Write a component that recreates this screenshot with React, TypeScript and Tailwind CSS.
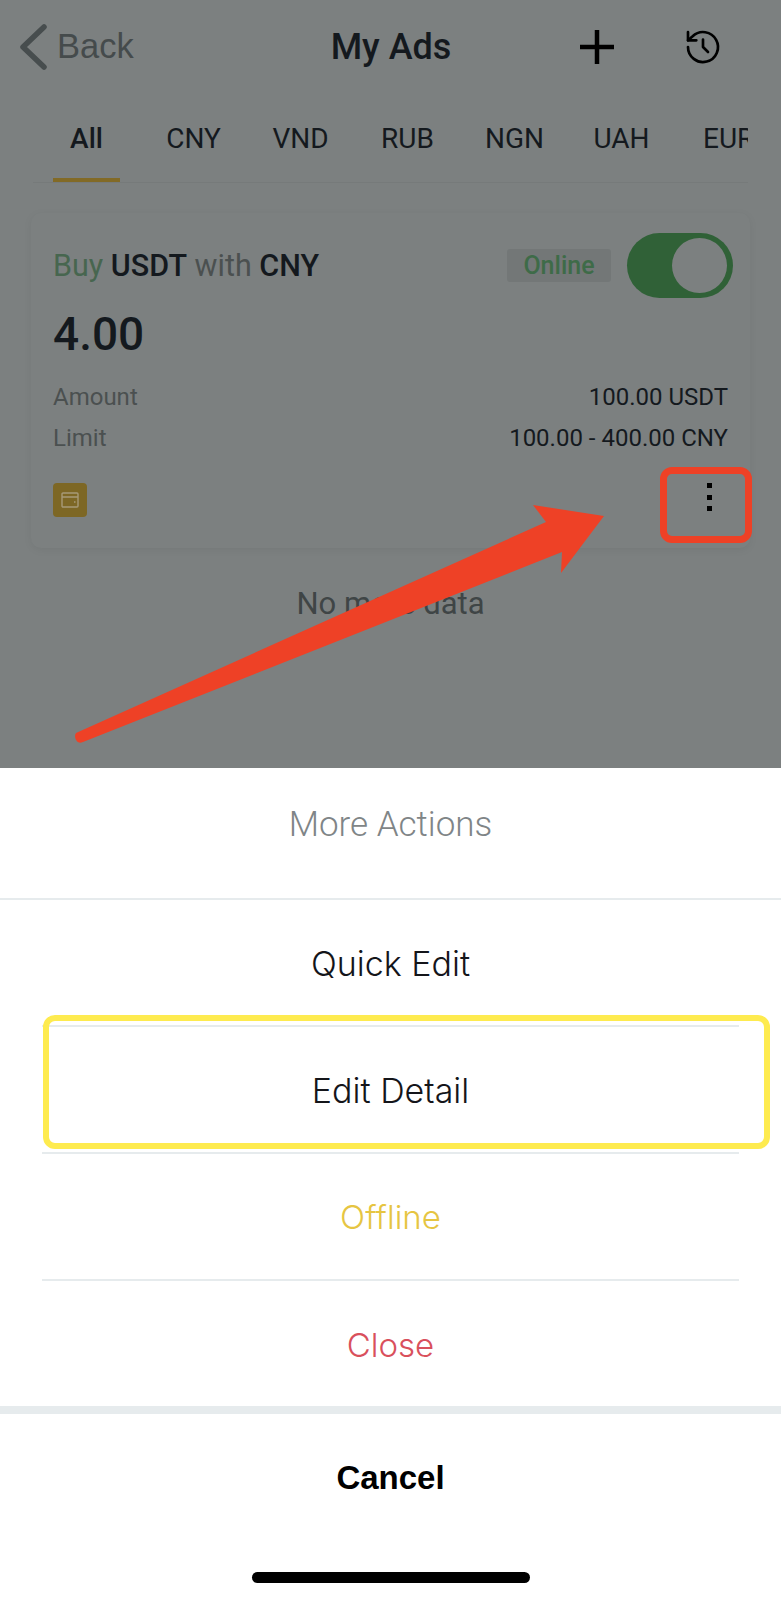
import React from "react";

const din = "font-['Roboto',sans-serif]";

function Header() {
  return (
    <div className="flex h-[94px] items-center pl-[18px]">
      <svg width="30" height="46" viewBox="0 0 30 46" className="shrink-0">
        <path d="M26 3 L5 23 L26 43" fill="none" stroke="#474d4e" strokeWidth="5.5" strokeLinecap="round" strokeLinejoin="round" />
      </svg>
      <span className="ml-[9px] w-[77px] font-['Liberation_Sans',sans-serif] text-[34.5px] text-[#454b4c]">Back</span>
      <span className={`ml-[192px] w-[130px] text-center whitespace-nowrap ${din} text-[36px] font-medium text-[#14191e]`}>My Ads</span>
      <svg width="36" height="36" viewBox="0 0 36 36" className="ml-[123px] shrink-0">
        <path d="M18 1V35M1 18H35" stroke="#000" strokeWidth="4.5" />
      </svg>
      <svg width="40" height="40" viewBox="0 0 24 24" className="ml-[68px] shrink-0" fill="none" stroke="#000" strokeWidth="1.6" strokeLinecap="round" strokeLinejoin="round">
        <path d="M3 12a9 9 0 1 0 2.8-6.5L3 8" />
        <path d="M3 3v5h5" />
        <path d="M12 7.5V12l3 3" />
      </svg>
    </div>
  );
}

function Tabs() {
  const tabs = ["CNY", "VND", "RUB", "NGN", "UAH"];
  return (
    <div className="mx-[33px] h-[89px] border-b border-[#767a7a]">
      <div className={`flex h-[88px] items-start ${din} text-[28px] text-[#14191e]`}>
        <div className="relative ml-[20px] flex h-[88px] w-[67px] justify-center pt-[24px] font-medium">
          All
          <div className="absolute bottom-0 left-0 h-[4px] w-[67px] bg-[#826a26]" />
        </div>
        <div className="ml-[20px] flex w-[608px] overflow-hidden pt-[24px]">
          {tabs.map((t) => (
            <div key={t} className="flex w-[107px] shrink-0 justify-center">{t}</div>
          ))}
          <div className="w-[73px] shrink-0 overflow-hidden whitespace-nowrap pl-[28px]">EUR</div>
        </div>
      </div>
    </div>
  );
}

function Card() {
  return (
    <div className={`mx-[31px] mt-[30px] h-[335px] rounded-[10px] bg-[#7c8080] px-[22px] shadow-[0_2px_8px_rgba(0,0,0,0.06)] ${din}`}>
      <div className="flex h-[100px] items-start pt-[20px]">
        <div className="mt-[15px] whitespace-nowrap text-[30.5px] leading-[36px] text-[#14191e]">
          <span className="text-[#47664f]">Buy</span> <span className="font-medium">USDT</span>{" "}
          <span className="text-[#4b5050]">with</span> <span className="font-medium">CNY</span>
        </div>
        <div className="ml-auto mt-[16px] flex h-[33px] w-[104px] items-center justify-center rounded-[3px] bg-[#737777] text-[25px] font-medium text-[#3e6b48]">
          Online
        </div>
        <div className="ml-[16px] mr-[-5px] flex h-[65px] w-[106px] shrink-0 items-center justify-end rounded-full bg-[#306137] pr-[6px]">
          <div className="h-[55px] w-[55px] rounded-full bg-[#7c8080]" />
        </div>
      </div>
      <div className="mt-[-7px] text-[46px] font-medium leading-[56px] text-[#14191e]">4.00</div>
      <div className="mt-[14px] flex h-[41px] items-center justify-between text-[24px] text-[#14191e]">
        <span className="text-[#4b5050]">Amount</span>
        <span>100.00 USDT</span>
      </div>
      <div className="flex h-[41px] items-center justify-between text-[24px] text-[#14191e]">
        <span className="text-[#4b5050]">Limit</span>
        <span>100.00 - 400.00 CNY</span>
      </div>
      <div className="mt-[25px] flex items-start justify-between">
        <div className="flex h-[34px] w-[34px] items-center justify-center rounded-[4px] bg-[#7d6725]">
          <svg width="20" height="20" viewBox="0 0 20 20" fill="none" stroke="#a79a78" strokeWidth="1.4">
            <rect x="2" y="3" width="16" height="14" rx="1" />
            <path d="M2 7H18M14 12h1.5" />
          </svg>
        </div>
        <div className="mr-[16px] flex h-[28px] flex-col justify-between">
          <div className="h-[5px] w-[5px] bg-black" />
          <div className="h-[5px] w-[5px] bg-black" />
          <div className="h-[5px] w-[5px] bg-black" />
        </div>
      </div>
    </div>
  );
}

function Row({ label, color }: { label: string; color: string }) {
  return (
    <div className="mx-[42px] flex h-[127px] items-center justify-center border-b-2 border-[#e6ebed] pt-[2px]">
      <span className={`font-['Inter',sans-serif] text-[34px] font-light ${color}`}>{label}</span>
    </div>
  );
}

function Sheet() {
  return (
    <div className="flex h-[832px] flex-col bg-white">
      <div className="flex h-[132px] items-center justify-center border-b-2 border-[#e6ebed] pb-[16px] font-['Roboto',sans-serif] text-[35px] font-light text-[#7f8587]">
        More Actions
      </div>
      <Row label="Quick Edit" color="text-[#14151a]" />
      <Row label="Edit Detail" color="text-[#14151a]" />
      <div className="mx-[42px] flex h-[127px] items-center justify-center border-b-2 border-[#e6ebed] pt-[2px]">
        <span className="font-['Inter',sans-serif] text-[33px] font-light text-[#e6c542]">Offline</span>
      </div>
      <div className="mx-[42px] flex h-[125px] items-center justify-center pt-[4px]">
        <span className="font-['Inter',sans-serif] text-[33px] font-light text-[#d9505c]">Close</span>
      </div>
      <div className="h-[8px] bg-[#e6ebed]" />
      <div className="flex h-[128px] items-center justify-center font-['Liberation_Sans',sans-serif] text-[33px] font-bold text-black">
        Cancel
      </div>
      <div className="mt-[30px] h-[11px] w-[278px] self-center rounded-full bg-black" />
    </div>
  );
}

export default function App() {
  return (
    <div className="relative h-[1600px] w-[781px] overflow-hidden bg-[#7c8080]">
      <div className="h-[768px]">
        <Header />
        <Tabs />
        <Card />
        <div className={`mt-[33px] text-center ${din} text-[31px] text-[#3f4546]`}>No more data</div>
      </div>
      <Sheet />

      <div className="absolute left-[660px] top-[467px] h-[76px] w-[92px] rounded-[12px] border-[7px] border-[#ee4126]" />
      <svg className="absolute left-0 top-0" width="781" height="768" viewBox="0 0 781 768">
        <path d="M76 733 L546 522 L533 505 L604 516 L561 573 L562 552 L83 742 Q78 744 76 740 Q74 736 76 733 Z" fill="#ee4126" />
      </svg>
      <div className="absolute left-[43px] top-[1015px] h-[134px] w-[727px] rounded-[12px] border-[6px] border-[#feeb4f]" />
    </div>
  );
}
